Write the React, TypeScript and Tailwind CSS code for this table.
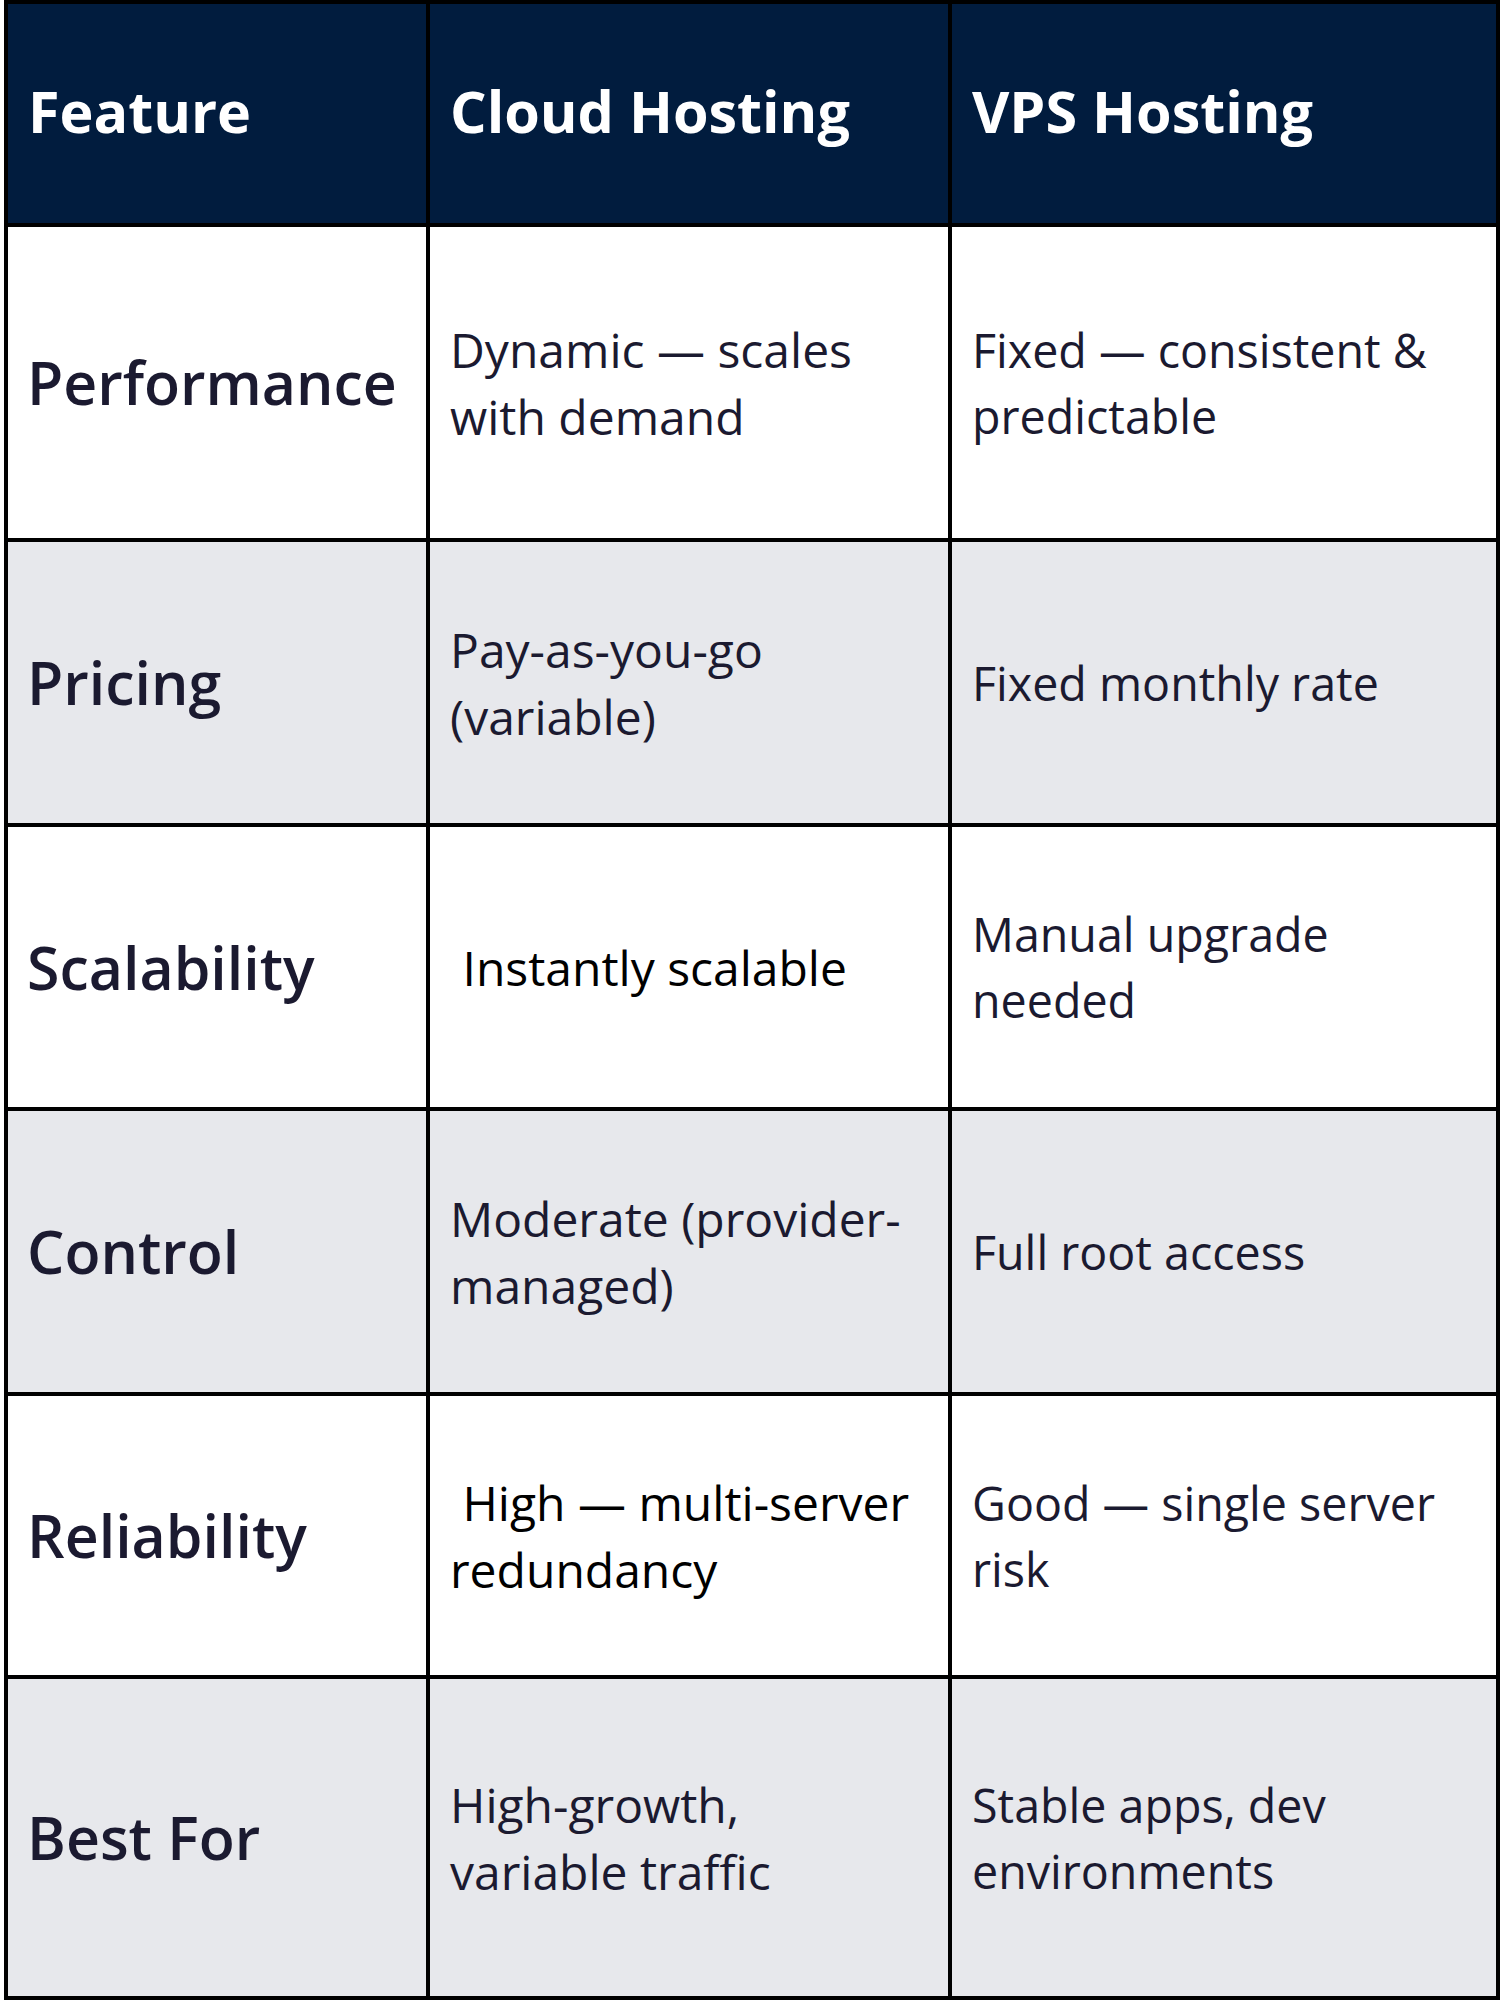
import React from 'react';

interface Row {
  feature: string;
  cloud: string;
  vps: string;
  cloudBlack?: boolean;
  height: string;
  shaded: boolean;
}

const rows: Row[] = [
  { feature: 'Performance', cloud: 'Dynamic — scales with demand', vps: 'Fixed — consistent & predictable', height: 'h-[311px]', shaded: false },
  { feature: 'Pricing', cloud: 'Pay-as-you-go (variable)', vps: 'Fixed monthly rate', height: 'h-[281px]', shaded: true },
  { feature: 'Scalability', cloud: '\u00a0Instantly scalable', vps: 'Manual upgrade needed', cloudBlack: true, height: 'h-[280px]', shaded: false },
  { feature: 'Control', cloud: 'Moderate (provider-managed)', vps: 'Full root access', height: 'h-[281px]', shaded: true },
  { feature: 'Reliability', cloud: '\u00a0High — multi-server redundancy', vps: 'Good — single server risk', cloudBlack: true, height: 'h-[279px]', shaded: false },
  { feature: 'Best For', cloud: 'High-growth, variable traffic', vps: 'Stable apps, dev environments', height: 'h-[317px]', shaded: true },
];

export default function App() {
  return (
    <div className="w-[1500px] h-[2000px] bg-white pl-[4px] font-['Open_Sans','Noto_Sans',sans-serif]">
      {/* black background shows through the gaps as the grid lines */}
      <div className="grid grid-cols-[418px_518px_544px] gap-[4px] bg-black p-[4px] w-[1496px]">
        {['Feature', 'Cloud Hosting', 'VPS Hosting'].map((h) => (
          <div key={h} className="h-[219px] bg-[#011c3e] flex items-center pl-[20px] pb-[5px] text-white text-[57.5px] font-bold">
            {h}
          </div>
        ))}

        {rows.map((r) => {
          const bg = r.shaded ? 'bg-[#e7e8ec]' : 'bg-white';
          return (
            <React.Fragment key={r.feature}>
              <div className={`${r.height} ${bg} flex items-center pl-[19px] text-[59px] font-semibold text-[#1b1a30]`}>
                {r.feature}
              </div>
              <div
                className={`${r.height} ${bg} flex items-center pl-[20px] pr-[26px] text-[48px] leading-[67px] ${
                  r.cloudBlack ? 'text-black' : 'text-[#1b1a30]'
                }`}
              >
                <p>{r.cloud}</p>
              </div>
              <div className={`${r.height} ${bg} flex items-center pl-[20px] pr-[30px] text-[46.6px] leading-[66px] text-[#1b1a30]`}>
                <p>{r.vps}</p>
              </div>
            </React.Fragment>
          );
        })}
      </div>
    </div>
  );
}
